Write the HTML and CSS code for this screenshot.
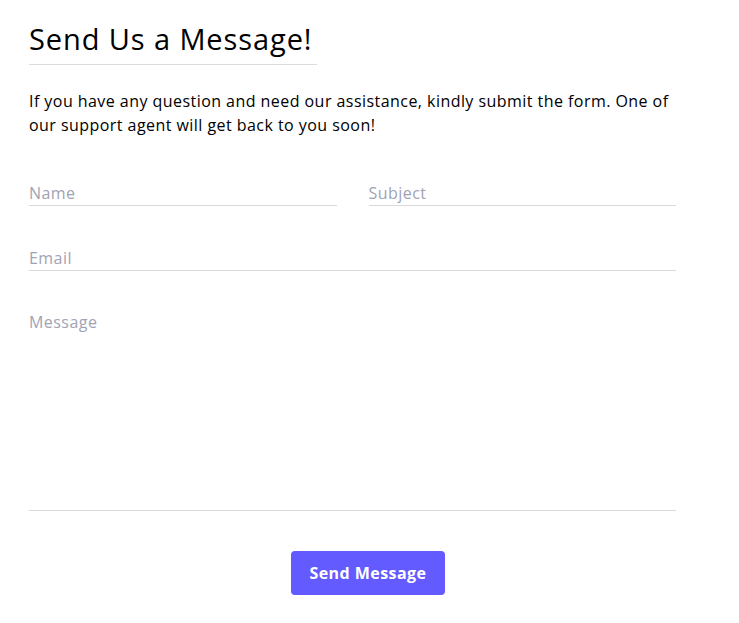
FILE: index.html
```html
<!DOCTYPE html>
<html lang="en">
<head>
    <meta charset="UTF-8">
    <meta name="viewport" content="width=device-width, initial-scale=1.0">
    <title>Contact</title>
    <link rel="stylesheet" href="styles.css">
</head>
<body>

    <div class="contact">
        <h2 class="contact-title">Send Us a Message!</h2>
        <p class="contact-intro">If you have any question and need our assistance, kindly submit the form. One of our support agent will get back to you soon!</p>

        <!-- Contact form -->
        <form class="contact-form">
            <div class="row">
                <input type="text" class="field" placeholder="Name">
                <input type="text" class="field" placeholder="Subject">
            </div>
            <div class="row single">
                <input type="email" class="field" placeholder="Email">
            </div>
            <div class="row single">
                <textarea class="field message" placeholder="Message"></textarea>
            </div>
            <div class="actions">
                <button type="button" class="send-button">Send Message</button>
            </div>
        </form>
    </div>

</body>
</html>
```

FILE: styles.css
```css
body {
    margin: 0;
    font-family: "Open Sans", sans-serif;
    letter-spacing: 0.45px;
    background-color: #fff;
    color: #000;
}

.contact {
    width: 678px;
    padding: 18px 0 0 29px;
}

.contact-title {
    display: inline-block;
    width: 288px;
    margin: 0;
    padding-bottom: 4px;
    font-size: 29px;
    font-weight: 400;
    line-height: 42px;
    letter-spacing: 0.9px;
    border-bottom: 1px solid #dcdcdc;
}

.contact-intro {
    width: 660px;
    margin: 24px 0 0;
    font-size: 16px;
    line-height: 24px;
}

.contact-form {
    margin-top: 43px;
}

.row {
    display: grid;
    grid-template-columns: 1fr 1fr;
    gap: 32px;
    width: 647px;
    margin-bottom: 39px;
}

.row.single {
    grid-template-columns: 1fr;
}

.field {
    height: 25px;
    padding: 0;
    font-family: inherit;
    font-size: 16px;
    line-height: 24px;
    letter-spacing: inherit;
    color: #000;
    border: none;
    border-bottom: 1px solid #d9d9d9;
    outline: none;
}

.field::placeholder {
    color: #a0a3b4;
}

.message {
    height: 200px;
    resize: none;
}

.actions {
    display: flex;
    justify-content: center;
    margin-top: 40px;
}

.send-button {
    width: 154px;
    height: 44px;
    font-family: inherit;
    font-size: 16px;
    font-weight: 700;
    letter-spacing: inherit;
    color: #fff;
    background-color: #635bff;
    border: none;
    border-radius: 4px;
    cursor: pointer;
}
```
